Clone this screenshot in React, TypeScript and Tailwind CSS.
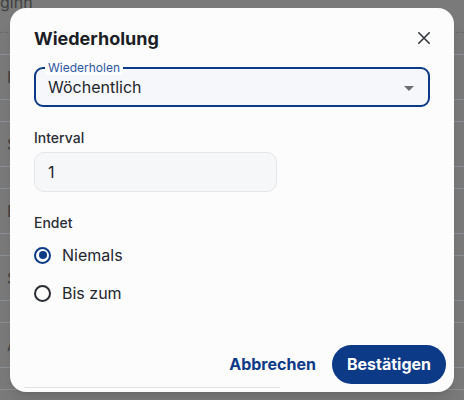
import React from "react";

function BgRow({ letter }: { letter: string }) {
  return (
    <div className="mb-[21px] flex h-[46px] items-center border-y border-[#8d8f97] pl-[7px] text-[16px] text-[#404040]">
      {letter}
    </div>
  );
}

export default function App() {
  return (
    <div
      className="relative h-[400px] w-[464px] overflow-hidden bg-[#7a7a7a]"
      style={{ fontFamily: "Inter, 'Noto Sans', sans-serif" }}
    >
      {/* dimmed page behind the dialog */}
      <div className="flex flex-col">
        <div className="-mt-[10px] h-[43px] border-b border-dashed border-[#6a6a6a] pl-0 text-[16px] leading-[24px] text-[#404040]">
          ginn
        </div>
        <div className="h-[21px]" />
        <BgRow letter="K" />
        <BgRow letter="S" />
        <BgRow letter="E" />
        <BgRow letter="S" />
        <BgRow letter="A" />
        <div className="border-t border-[#8d8f97]" />
      </div>

      {/* dialog */}
      <div className="absolute left-[10px] top-[8px] flex h-[384px] w-[444px] flex-col rounded-[16px] bg-[#fcfcfd] shadow-lg">
        <div className="flex flex-col px-6 pt-[17px]">
          <div className="flex h-7 items-center justify-between">
            <h2 className="text-[18px] font-bold leading-7 text-[#1b1e25]">Wiederholung</h2>
            <button className="-mt-[2px] flex h-3 w-3 items-center justify-center text-[#33363c]">
              <svg width="12" height="12" viewBox="0 0 12 12" fill="none" stroke="currentColor" strokeWidth="1.6" strokeLinecap="round">
                <path d="M0.8 0.8 L11.2 11.2 M11.2 0.8 L0.8 11.2" />
              </svg>
            </button>
          </div>

          {/* select */}
          <div className="relative mt-[14px] flex h-[40px] items-center rounded-[9px] border-2 border-[#0d3a87] bg-[#f5f7fa] pl-[12px] pr-[14px]">
            <span className="absolute -top-[8px] left-[9px] bg-[#fcfcfd] px-[3px] text-[12px] leading-[14px] text-[#2f57a3]">
              Wiederholen
            </span>
            <span className="flex-1 text-[16px] leading-6 text-[#23262d]">Wöchentlich</span>
            <svg width="10" height="5" viewBox="0 0 10 5" className="mt-[3px]">
              <path d="M0 0 L10 0 L5 5 Z" fill="#6d6e72" />
            </svg>
          </div>

          {/* interval */}
          <label className="mt-[21px] text-[14px] font-medium leading-5 text-[#2a2d34]">Interval</label>
          <div className="mt-1 flex h-[40px] w-[243px] items-center rounded-[10px] border border-[#e4e6ea] bg-[#f6f7f9] px-[13px] text-[16px] text-[#23262d]">
            1
          </div>

          {/* ends */}
          <div className="mt-[21px] text-[14px] font-medium leading-5 text-[#2a2d34]">Endet</div>
          <div className="mt-[10px] flex h-6 items-center gap-[11px]">
            <span className="flex h-[17px] w-[17px] items-center justify-center rounded-full border-2 border-[#0d3a87]">
              <span className="h-[8px] w-[8px] rounded-full bg-[#0d3a87]" />
            </span>
            <span className="text-[16px] leading-6 text-[#23262d]">Niemals</span>
          </div>
          <div className="mt-[14px] flex h-6 items-center gap-[11px]">
            <span className="h-[17px] w-[17px] rounded-full border-2 border-[#2a2d34]" />
            <span className="text-[16px] leading-6 text-[#23262d]">Bis zum</span>
          </div>
        </div>

        {/* footer */}
        <div className="mt-auto flex items-center justify-end gap-4 pb-2 pr-2">
          <button className="h-10 text-[16px] font-bold text-[#0d3a87]">Abbrechen</button>
          <button className="h-[39px] rounded-full bg-[#0d3a87] px-[15px] text-[16px] font-bold text-white">
            Bestätigen
          </button>
        </div>

        {/* horizontal scrollbar */}
        <div className="absolute bottom-[4px] left-[14px] h-px w-[256px] bg-[#e2e2e4]" />
      </div>
    </div>
  );
}
